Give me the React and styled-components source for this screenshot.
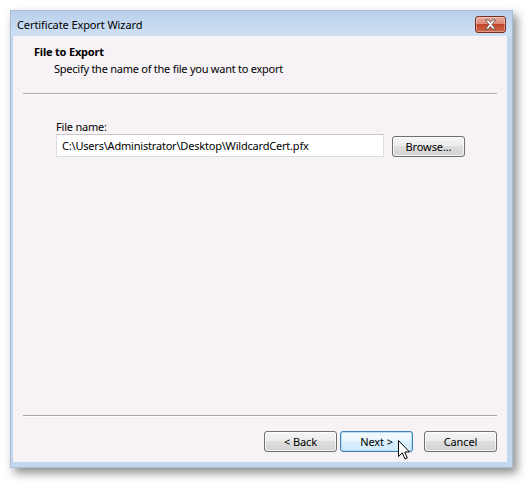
import React from "react";
import styled, { createGlobalStyle } from "styled-components";

const GlobalStyle = createGlobalStyle`
  html, body { margin: 0; padding: 0; background: #ffffff; }
  body { font-family: "Noto Sans", "Open Sans", sans-serif; font-size: 11px; color: #000; }
`;

const Page = styled.div`
  position: relative;
  width: 531px;
  height: 487px;
  padding: 10px 0 0 10px;
  box-sizing: border-box;
`;

const Window = styled.div`
  width: 503px;
  height: 458px;
  display: flex;
  flex-direction: column;
  background: #c3d7ef;
  border: 1px solid #a7bdd8;
  box-sizing: border-box;
  box-shadow: 4px 5px 9px rgba(0, 0, 0, 0.45);
`;

const TitleBar = styled.div`
  height: 25px;
  flex: none;
  display: flex;
  align-items: center;
  justify-content: space-between;
  padding: 0 6px 0 6px;
  background: linear-gradient(#b9d0eb, #c6daf0 60%, #cddff3);
`;

const Title = styled.span`
  font-size: 11px;
  color: #000;
  letter-spacing: -0.1px;
  margin-top: 1px;
`;

const CloseButton = styled.div`
  width: 29px;
  height: 15px;
  margin-top: 2px;
  border: 1px solid #7a2f24;
  border-radius: 3px;
  display: flex;
  align-items: center;
  justify-content: center;
  background: linear-gradient(#e9a99b 0%, #dc8a78 45%, #c3452d 50%, #cf6a4c 100%);
  box-shadow: inset 0 0 0 1px rgba(255, 255, 255, 0.35);
`;

const Content = styled.div`
  flex: 1;
  margin: 0 5px 5px 2px;
  background: #f6f2f6;
  display: flex;
  flex-direction: column;
`;

const Header = styled.div`
  padding: 8px 0 0 21px;
  height: 57px;
  box-sizing: border-box;
  flex: none;
`;

const HeaderTitle = styled.div`
  font-weight: bold;
  font-size: 11px;
  line-height: 15px;
  letter-spacing: -0.2px;
`;

const HeaderSub = styled.div`
  margin: 2px 0 0 20px;
  font-size: 11px;
  line-height: 15px;
  letter-spacing: -0.25px;
`;

const Separator = styled.div`
  height: 1px;
  margin: 0 10px 0 10px;
  background: #a9a9a9;
  border-bottom: 1px solid #ffffff;
  flex: none;
`;

const Body = styled.div`
  flex: 1;
  padding: 24px 0 0 43px;
`;

const Label = styled.div`
  font-size: 11px;
  line-height: 15px;
  letter-spacing: -0.2px;
`;

const Row = styled.div`
  display: flex;
  align-items: flex-end;
  gap: 8px;
`;

const TextBox = styled.div`
  width: 328px;
  height: 23px;
  box-sizing: border-box;
  border: 1px solid #dcdcdc;
  border-top-color: #c8c8c8;
  background: #ffffff;
  padding: 0 0 0 5px;
  display: flex;
  align-items: center;
  font-size: 11px;
  letter-spacing: -0.2px;
`;

const Button = styled.div`
  width: ${(p) => p.$w || 73}px;
  height: 21px;
  box-sizing: border-box;
  border: 1px solid ${(p) => (p.$focus ? "#3c7fb1" : "#707070")};
  border-radius: 3px;
  display: flex;
  align-items: center;
  justify-content: center;
  font-size: 11px;
  letter-spacing: -0.1px;
  background: ${(p) =>
    p.$focus
      ? "linear-gradient(#f3fafe 0%, #eaf6fd 45%, #d9effc 50%, #cfeafb 100%)"
      : "linear-gradient(#f6f6f6 0%, #ececec 45%, #dedede 50%, #d3d3d3 100%)"};
  box-shadow: inset 0 0 0 1px ${(p) => (p.$focus ? "#b8e0f7" : "rgba(255,255,255,0.7)")};
`;

const Footer = styled.div`
  flex: none;
  display: flex;
  justify-content: flex-end;
  padding: 14px 10px 10px 0;
`;

const ButtonGap = styled.div`
  width: ${(p) => p.$w}px;
  flex: none;
`;

const Cursor = styled.svg`
  position: absolute;
  left: 398px;
  top: 440px;
`;

export default function App() {
  return (
    <Page>
      <GlobalStyle />
      <Window>
        <TitleBar>
          <Title>Certificate Export Wizard</Title>
          <CloseButton>
            <svg width="13" height="11" viewBox="0 0 13 11">
              <path
                d="M1.5 1 L4.5 1 L6.5 3.5 L8.5 1 L11.5 1 L8 5.5 L11.5 10 L8.5 10 L6.5 7.5 L4.5 10 L1.5 10 L5 5.5 Z"
                fill="#ffffff"
                stroke="#5a4a48"
                strokeWidth="0.8"
              />
            </svg>
          </CloseButton>
        </TitleBar>
        <Content>
          <Header>
            <HeaderTitle>File to Export</HeaderTitle>
            <HeaderSub>Specify the name of the file you want to export</HeaderSub>
          </Header>
          <Separator />
          <Body>
            <Label>File name:</Label>
            <Row>
              <TextBox>C:\Users\Administrator\Desktop\WildcardCert.pfx</TextBox>
              <Button>Browse...</Button>
            </Row>
          </Body>
          <Separator />
          <Footer>
            <Button>&lt; Back</Button>
            <ButtonGap $w={3} />
            <Button $focus>Next &gt;</Button>
            <ButtonGap $w={11} />
            <Button>Cancel</Button>
          </Footer>
        </Content>
      </Window>
      <Cursor width="13" height="21" viewBox="0 0 13 21">
        <path
          d="M0.5 0.5 L0.5 16.5 L4.3 12.8 L7 19 L9.3 18 L6.7 12 L11.5 12 Z"
          fill="#ffffff"
          stroke="#000000"
          strokeWidth="1"
          strokeLinejoin="miter"
        />
      </Cursor>
    </Page>
  );
}
